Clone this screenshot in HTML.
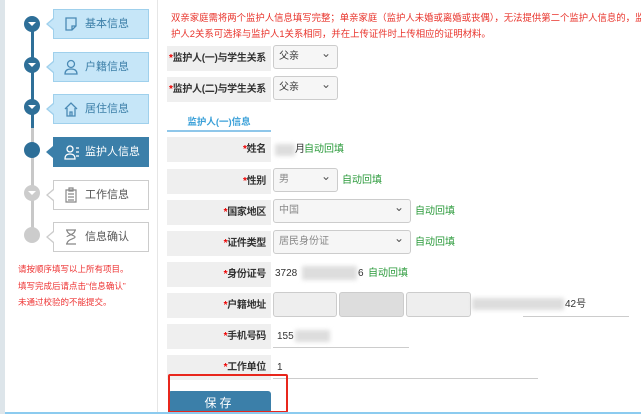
<!DOCTYPE html>
<html><head><meta charset="utf-8"><style>
*{margin:0;padding:0;box-sizing:border-box}
body{width:641px;height:414px;overflow:hidden;background:#fff;font-family:"Liberation Sans","Noto Sans CJK SC",sans-serif;position:relative}
.a{position:absolute}
.box{position:absolute;left:53px;width:96px;height:30px;border:1px solid #9fd0ec;background:#c6e6f8;color:#3c7fa8;font-size:11px;line-height:28px;padding-left:31px;white-space:nowrap}
.box.g{background:#fff;border-color:#ccc;color:#555}
.box.on{background:#3b7fa9;border-color:#3b7fa9;color:#fff}
.box:before{content:"";position:absolute;left:-8px;top:8px;border:6px solid transparent;border-right:7px solid #9fd0ec;border-left:0}
.box:after{content:"";position:absolute;left:-6px;top:9px;border:5px solid transparent;border-right:6px solid #c6e6f8;border-left:0}
.box.g:before{border-right-color:#ccc}.box.g:after{border-right-color:#fff}
.box.on:before,.box.on:after{border-right-color:#3b7fa9}
.ic{position:absolute;left:10px;top:6px}
.dot{position:absolute;left:24px;width:16px;height:16px;border-radius:50%;background:#2e6f98}
.dot.g{background:#ccc}
.dot i{position:absolute;left:4px;top:6px;border:4px solid transparent;border-top:4px solid #fff;border-bottom:0}
.lab{position:absolute;left:167px;width:104px;height:25px;background:#efefef;font-size:10px;font-weight:bold;color:#333;text-align:right;padding-right:5px;line-height:25px;white-space:nowrap;letter-spacing:-0.3px}
.lab b{color:#e00}
.sel{position:absolute;height:24px;border:1px solid #ccc;border-radius:3px;background:#f6f6f6;font-size:10px;color:#888;line-height:22px;padding-left:5px}
.sel:after{content:"⌄";position:absolute;right:6px;top:-4px;font-size:12px;color:#555}
.val{position:absolute;font-size:10px;color:#333;line-height:12px}
.auto{position:absolute;font-size:10px;color:#2a9a3a;line-height:12px}
.blur{position:absolute;background:#ddd;filter:blur(2px)}
.ul{position:absolute;height:1px;background:#ccc}
</style></head><body>
<div class="a" style="left:0;top:0;width:5px;height:414px;background:#dde5ea"></div>
<div class="a" style="left:157px;top:0;width:1px;height:414px;background:#e6e6e6"></div>
<div class="a" style="left:31px;top:24px;width:3px;height:104px;background:#2e6f98"></div>
<div class="a" style="left:31px;top:128px;width:3px;height:108px;background:#c8c8c8"></div>
<div class="dot" style="top:16px"><i></i></div>
<div class="dot" style="top:57px"><i></i></div>
<div class="dot" style="top:99px"><i></i></div>
<div class="dot" style="top:142px"></div>
<div class="dot g" style="top:185px"><i></i></div>
<div class="dot g" style="top:227px"></div>
<div class="box" style="top:9px"><svg class="ic" width="14" height="16"><path d="M2 2h10v8l-4 4H2z M8 14v-4h4" fill="none" stroke="#4a8ab5" stroke-width="1.3"/></svg>基本信息</div>
<div class="box" style="top:52px"><svg class="ic" width="14" height="16"><circle cx="7" cy="5" r="3.5" fill="none" stroke="#4a8ab5" stroke-width="1.3"/><path d="M1 15c0-4 3-5 6-5s6 1 6 5z" fill="none" stroke="#4a8ab5" stroke-width="1.3"/></svg>户籍信息</div>
<div class="box" style="top:94px"><svg class="ic" width="14" height="16"><path d="M1 8l6-6 6 6M3 7v8h8V7M6 15v-4h2v4" fill="none" stroke="#4a8ab5" stroke-width="1.3"/></svg>居住信息</div>
<div class="box on" style="top:137px"><svg class="ic" width="16" height="16"><circle cx="6" cy="5" r="3" fill="none" stroke="#fff" stroke-width="1.3"/><path d="M1 15c0-4 2-5 5-5s5 1 5 5zM12 4h3M12 8h3M12 12h3" fill="none" stroke="#fff" stroke-width="1.3"/></svg>监护人信息</div>
<div class="box g" style="top:180px"><svg class="ic" width="14" height="16"><path d="M2 3h10v12H2zM5 1h4v3H5zM4 7h6M4 10h6M4 13h6" fill="none" stroke="#888" stroke-width="1.2"/></svg>工作信息</div>
<div class="box g" style="top:222px"><svg class="ic" width="14" height="16"><path d="M2 1h10M2 15h10M3 1c0 5 8 5 8 7s-8 2-8 7M11 1c0 5-8 5-8 7" fill="none" stroke="#888" stroke-width="1.2"/></svg>信息确认</div>
<div class="a" style="left:18px;top:261px;font-size:8.5px;color:#e33;line-height:16.5px;white-space:nowrap">请按顺序填写以上所有项目。<br>填写完成后请点击“信息确认”<br>未通过校验的不能提交。</div>

<div class="a" style="left:171px;top:10px;font-size:9.4px;color:#e8322a;line-height:16px;white-space:nowrap">双亲家庭需将两个监护人信息填写完整；单亲家庭（监护人未婚或离婚或丧偶），无法提供第二个监护人信息的，监<br>护人2关系可选择与监护人1关系相同，并在上传证件时上传相应的证明材料。</div>
<div class="lab" style="top:46px"><b>*</b>监护人(一)与学生关系</div>
<div class="sel" style="left:273px;top:45px;width:65px;color:#333">父亲</div>
<div class="lab" style="top:77px"><b>*</b>监护人(二)与学生关系</div>
<div class="sel" style="left:273px;top:76px;width:65px;color:#333">父亲</div>
<div class="a" style="left:167px;top:114px;width:104px;text-align:center;font-size:9.5px;font-weight:bold;color:#3aa0d8">监护人(一)信息</div>
<div class="a" style="left:167px;top:130px;width:104px;height:2px;background:#8fc7ea"></div>

<div class="lab" style="top:137px"><b>*</b>姓名</div>
<div class="blur" style="left:275px;top:144px;width:20px;height:12px"></div><div class="val" style="left:295px;top:144px">月</div>
<div class="auto" style="left:304px;top:144px">自动回填</div>
<div class="lab" style="top:169px"><b>*</b>性别</div>
<div class="sel" style="left:273px;top:168px;width:65px">男</div><div class="auto" style="left:342px;top:175px">自动回填</div>
<div class="lab" style="top:200px"><b>*</b>国家地区</div>
<div class="sel" style="left:273px;top:199px;width:138px">中国</div><div class="auto" style="left:415px;top:206px">自动回填</div>
<div class="lab" style="top:231px"><b>*</b>证件类型</div>
<div class="sel" style="left:273px;top:230px;width:138px">居民身份证</div><div class="auto" style="left:415px;top:237px">自动回填</div>
<div class="lab" style="top:262px"><b>*</b>身份证号</div>
<div class="val" style="left:275px;top:268px">3728</div><div class="blur" style="left:302px;top:266px;width:55px;height:14px"></div><div class="val" style="left:358px;top:268px">6</div><div class="auto" style="left:368px;top:268px">自动回填</div>
<div class="lab" style="top:293px"><b>*</b>户籍地址</div>
<div class="a" style="left:273px;top:292px;width:64px;height:25px;border:1px solid #ccc;border-radius:3px;background:#eee"></div>
<div class="a" style="left:339px;top:292px;width:65px;height:25px;border:1px solid #ccc;border-radius:3px;background:#ddd"></div>
<div class="a" style="left:406px;top:292px;width:65px;height:25px;border:1px solid #ccc;border-radius:3px;background:#eee"></div>
<div class="blur" style="left:472px;top:298px;width:92px;height:12px"></div>
<div class="val" style="left:565px;top:299px">42号</div>
<div class="ul" style="left:523px;top:316px;width:106px"></div>
<div class="lab" style="top:324px"><b>*</b>手机号码</div>
<div class="val" style="left:277px;top:331px">155</div><div class="blur" style="left:295px;top:330px;width:35px;height:12px"></div>
<div class="ul" style="left:273px;top:347px;width:136px"></div>
<div class="lab" style="top:355px"><b>*</b>工作单位</div>
<div class="val" style="left:277px;top:362px">1</div>
<div class="ul" style="left:273px;top:378px;width:265px"></div>
<div class="a" style="left:168px;top:391px;width:103px;height:23px;background:#3b7fa9;border-radius:3px 3px 0 0;color:#fff;font-size:12px;text-align:center;line-height:24px;letter-spacing:3px">保存</div>
<div class="a" style="left:168px;top:374px;width:120px;height:39px;border:2px solid #e8261c;border-radius:2px"></div>
<div class="a" style="left:5px;top:412px;width:636px;height:2px;background:#8ccbef"></div>
</body></html>
